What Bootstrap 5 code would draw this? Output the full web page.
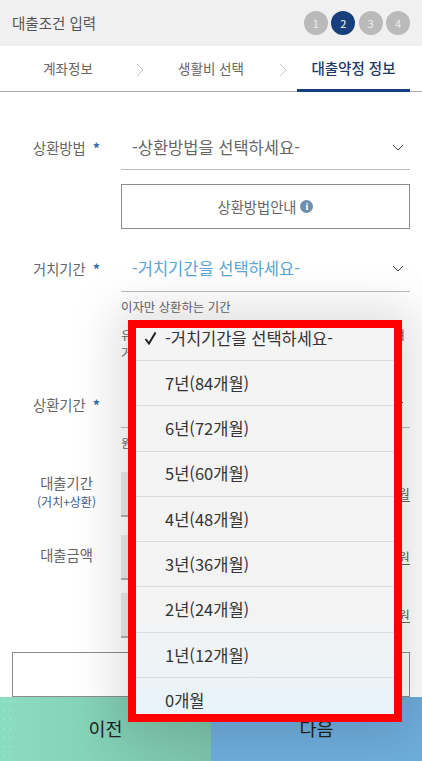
<!DOCTYPE html><html lang="ko">
<head>
  <meta charset="UTF-8">
  <meta name="viewport" content="width=device-width, initial-scale=1.0">
  <title>대출조건 입력</title>
  <link href="https://cdn.jsdelivr.net/npm/bootstrap@5.3.0/dist/css/bootstrap.min.css" rel="stylesheet">
  <style>
    body { background: #fff; font-family: "Noto Sans CJK KR", "Noto Sans", sans-serif; color: #666; }
    .screen { height: 761px; overflow: hidden; }
    .top-head { height: 46px; background: #f0f0f0; padding: 0 12px; font-size: 14.5px; color: #555; }
    .step-dot { width: 24px; height: 24px; border-radius: 50%; background: #bababa; color: #eee; font-size: 11px; }
    .step-dot.on { background: #163f7c; color: #fff; }
    .steps { gap: 3.4px; }
    .tab-row { height: 46px; border-bottom: 1px solid #aaa; font-size: 13.5px; }
    .tab-one { width: 136px; }
    .tab-two { width: 130px; margin-right: 3px; }
    .tab-three { width: 113px; margin-left: 8px; height: 46px; border-bottom: 3px solid #163f7c; padding-top: 1px; color: #1c3a66; font-size: 14.5px; font-weight: 500; }
    .tab-arrow { width: 10px; padding-top: 2px; }
    .form-area { padding: 33px 12px 0; }
    .label-col { width: 109px; flex: none; text-align: center; font-size: 14.3px; }
    .label-pick { height: 45px; }
    .label-up { padding-bottom: 5px; line-height: 20px; }
    .req { color: #3b6ea5; font-weight: 700; margin-left: 7px; }
    .pick-row { height: 45px; border-bottom: 1px solid #bbb; padding: 0 6px 0 11px; font-size: 16.5px; }
    .pick-row.tall { height: 46px; }
    .pick-row.active { color: #5aa5d5; }
    .outline-btn { height: 45px; margin-top: 14px; border: 1px solid #8c8c8c; border-radius: 0; background: #fff; color: #666; font-size: 14.3px; width: 100%; }
    .info-dot { width: 13px; height: 13px; border-radius: 50%; background: #6d8fae; color: #fff; font-size: 10px; font-weight: 700; line-height: 13px; font-family: "Liberation Serif", serif; margin-left: 4px; }
    .help-line { font-size: 12.4px; line-height: 18px; color: #666; }
    .help-first { margin-top: 6px; }
    .help-next { margin-top: 10px; padding-right: 5px; }
    .sub-label { font-size: 12px; color: #3a5a8a; line-height: 18px; }
    .amount-box { flex: 1; height: 45px; background: #e9e9e9; border-bottom: 2px solid #b0b0b0; }
    .unit { width: 16px; text-align: right; font-size: 13.5px; text-decoration: underline; }
    .wide-btn { display: block; height: 45px; margin-top: 14px; border: 1px solid #8c8c8c; background: #fff; width: 100%; }
    .gap-two { margin-top: 17px; }
    .gap-three { margin-top: 20px; }
    .gap-four { margin-top: 18px; }
    .gap-five { margin-top: 13px; }
    .foot-bar { height: 64px; font-size: 18.5px; color: #222; }
    .foot-prev { background: linear-gradient(90deg, #8bddc1, #7cc3ac); }
    .foot-dots { width: 16px; height: 64px; background-image: radial-gradient(circle, #fff 0.6px, transparent 1px); background-size: 7px 9px; opacity: .5; }
    .foot-next { background: #6eaddb; }
    .pick-sheet { left: 128px; top: 320px; width: 274px; height: 402px; border: 8px solid #f00; background: linear-gradient(180deg, #f4f4f4 0, #f3f3f3 74%, #e8f3fa 100%); box-shadow: 0 0 45px 12px rgba(0, 0, 0, .13); overflow: hidden; }
    .pick-sheet .list-group-item { background: transparent; height: 45.3px; padding: 0 0 0 29px; border-color: #dcdcdc; color: #333; font-size: 16.5px; border-radius: 0; }
    .pick-sheet .list-group-item:first-child { height: 33px; padding-bottom: 12px; }
    .tick { left: 8px; top: 3px; }
  </style>
</head>
<body>
<div class="screen position-relative d-flex flex-column">
  <div class="top-head d-flex align-items-center justify-content-between">
    <span>대출조건 입력</span>
    <div class="steps d-flex">
      <span class="step-dot d-flex align-items-center justify-content-center">1</span>
      <span class="step-dot on d-flex align-items-center justify-content-center">2</span>
      <span class="step-dot d-flex align-items-center justify-content-center">3</span>
      <span class="step-dot d-flex align-items-center justify-content-center">4</span>
    </div>
  </div>

  <div class="tab-row d-flex align-items-center">
    <div class="tab-one text-center">계좌정보</div>
    <div class="tab-arrow d-flex"><svg width="8" height="14" viewBox="0 0 8 14"><path d="M1 1l6 6-6 6" fill="none" stroke="#c4c4c4"/></svg></div>
    <div class="tab-two text-center">생활비 선택</div>
    <div class="tab-arrow d-flex"><svg width="8" height="14" viewBox="0 0 8 14"><path d="M1 1l6 6-6 6" fill="none" stroke="#c4c4c4"/></svg></div>
    <div class="tab-three d-flex align-items-center justify-content-center">대출약정 정보</div>
  </div>

  <div class="form-area flex-grow-1">
    <div class="d-flex">
      <div class="label-col label-pick d-flex align-items-center justify-content-center">상환방법<span class="req">*</span></div>
      <div class="flex-grow-1">
        <div class="pick-row d-flex align-items-center justify-content-between">
          <span>-상환방법을 선택하세요-</span>
          <svg width="12" height="7" viewBox="0 0 12 7"><path d="M1 1l5 5 5-5" fill="none" stroke="#444"/></svg>
        </div>
        <button type="button" class="outline-btn d-flex align-items-center justify-content-center">상환방법안내<span class="info-dot text-center">i</span></button>
      </div>
    </div>

    <div class="d-flex gap-two">
      <div class="label-col label-pick d-flex align-items-center justify-content-center">거치기간<span class="req">*</span></div>
      <div class="flex-grow-1">
        <div class="pick-row tall active d-flex align-items-center justify-content-between">
          <span>-거치기간을 선택하세요-</span>
          <svg width="12" height="7" viewBox="0 0 12 7"><path d="M1 1l5 5 5-5" fill="none" stroke="#444"/></svg>
        </div>
        <div class="help-line help-first">이자만 상환하는 기간</div>
        <div class="help-line help-next d-flex justify-content-between"><span>유</span><span>며</span></div>
        <div class="help-line">거</div>
      </div>
    </div>

    <div class="d-flex gap-three">
      <div class="label-col label-pick d-flex align-items-center justify-content-center">상환기간<span class="req">*</span></div>
      <div class="flex-grow-1">
        <div class="pick-row tall d-flex align-items-center justify-content-end">
          <svg width="12" height="7" viewBox="0 0 12 7"><path d="M1 1l5 5 5-5" fill="none" stroke="#444"/></svg>
        </div>
        <div class="help-line help-first">원</div>
      </div>
    </div>

    <div class="d-flex align-items-center gap-three">
      <div class="label-col label-up">대출기간<div class="sub-label">(거치+상환)</div></div>
      <div class="amount-box"></div>
      <div class="unit">월</div>
    </div>
    <div class="d-flex align-items-center gap-four">
      <div class="label-col label-up">대출금액</div>
      <div class="amount-box"></div>
      <div class="unit">원</div>
    </div>
    <div class="d-flex align-items-center gap-five">
      <div class="label-col"></div>
      <div class="amount-box"></div>
      <div class="unit">원</div>
    </div>
    <button type="button" class="wide-btn"></button>
  </div>

  <div class="foot-bar d-flex">
    <div class="foot-prev w-50 position-relative d-flex align-items-center justify-content-center">
      <span class="foot-dots position-absolute top-0 start-0"></span>이전
    </div>
    <div class="foot-next w-50 d-flex align-items-center justify-content-center">다음</div>
  </div>

  <div class="pick-sheet position-absolute">
    <ul class="list-group list-group-flush">
      <li class="list-group-item d-flex align-items-center position-relative">
        <svg class="tick position-absolute" width="13" height="14" viewBox="0 0 13 14"><path d="M1.5 8l3.5 4.5L11.5 1.5" fill="none" stroke="#222" stroke-width="2"/></svg>
        -거치기간을 선택하세요-
      </li>
      <li class="list-group-item d-flex align-items-center">7년(84개월)</li>
      <li class="list-group-item d-flex align-items-center">6년(72개월)</li>
      <li class="list-group-item d-flex align-items-center">5년(60개월)</li>
      <li class="list-group-item d-flex align-items-center">4년(48개월)</li>
      <li class="list-group-item d-flex align-items-center">3년(36개월)</li>
      <li class="list-group-item d-flex align-items-center">2년(24개월)</li>
      <li class="list-group-item d-flex align-items-center">1년(12개월)</li>
      <li class="list-group-item d-flex align-items-center">0개월</li>
    </ul>
  </div>
</div>
<script src="https://cdn.jsdelivr.net/npm/bootstrap@5.3.0/dist/js/bootstrap.bundle.min.js"></script>
</body>
</html>
